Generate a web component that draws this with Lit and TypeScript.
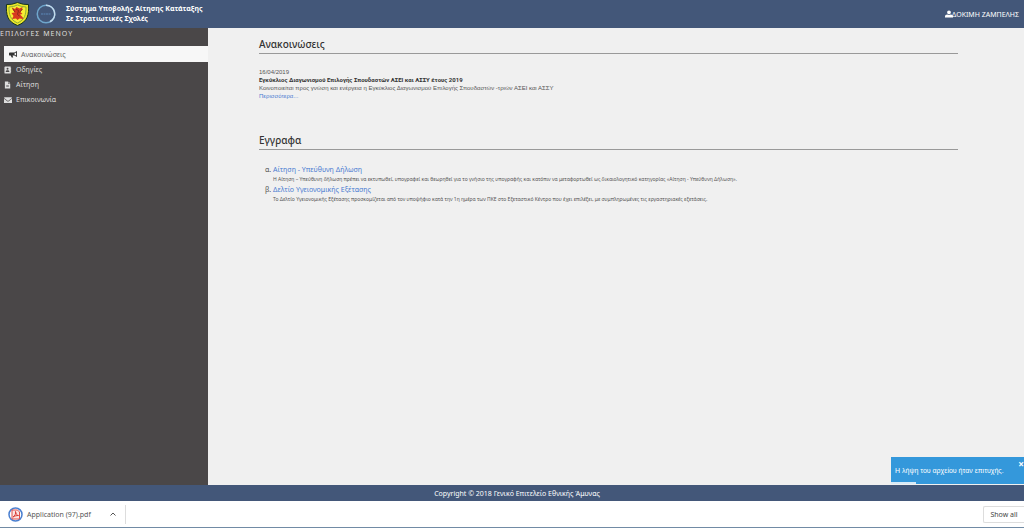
import { LitElement, html, css, svg } from "lit";
import { customElement, property } from "lit/decorators.js";

const ICONS: Record<string, unknown> = {
  horn: svg`<path fill-rule="evenodd" d="M18 1v14l-6-3.500H8l1.500 4.500H6l-2-4.500H2a2 2 0 0 1-2-2V6.500a2 2 0 0 1 2-2h10zM16 4.500L12.500 6.200v3.600L16 11.500z"/>`,
  book: svg`<path fill-rule="evenodd" d="M3 0h12v3h1v2h-1v2h1v2h-1v2h1v2h-1v3H3a2 2 0 0 1-2-2V2a2 2 0 0 1 2-2zM8 3a2.200 2.200 0 1 0 0 4.400A2.200 2.200 0 0 0 8 3zM4 12.500h8v-1c0-4-8-4-8 0z"/>`,
  file: svg`<path fill-rule="evenodd" d="M2 0h7v5h5v11H2zM10 0l4 4h-4zM5 8v1.200h6V8zM5 11v1.200h6V11z"/>`,
  mail: svg`<path d="M0 3.500C0 2.500.7 2 1.500 2h15c.8 0 1.500.5 1.500 1.500L9 10zM0 5.300L9 11.700l9-6.400V15H0z"/>`,
  user: svg`<path d="M9 0a4.300 4.300 0 1 1 0 8.600A4.300 4.300 0 0 1 9 0zM5 9c2.500 1.300 5.500 1.300 8 0 3 .2 5 2 5 4.500V16H0v-2.500C0 11 2 9.200 5 9z"/>`,
};

const icon = (name: string) =>
  html`<svg class="icon" viewBox="0 0 18 16" aria-hidden="true">${ICONS[name]}</svg>`;

@customElement("app-header")
class AppHeader extends LitElement {
  static styles = css`
    :host {
      display: flex;
      align-items: center;
      height: 28px;
      padding: 0 5px;
      box-sizing: border-box;
      background: #435779;
      color: #fff;
    }
    .crest { width: 25px; height: 24px; }
    .ring { width: 20px; height: 20px; margin-left: 6px; }
    .title {
      margin: 0 auto 0 10px;
      font-size: 7px;
      line-height: 10px;
      font-weight: 700;
    }
    .user {
      display: flex;
      align-items: center;
      color: inherit;
      text-decoration: none;
      font-size: 7px;
    }
    .icon { width: 8px; height: 8px; margin-right: -1px; fill: #fff; }
  `;
  render() {
    return html`
      <svg class="crest" viewBox="0 0 50 48" aria-hidden="true">
        <path d="M3 5Q13 6 25 1q12 5 22 4c1 20-1 34-22 42C4 39 2 25 3 5z" fill="#e9e52a" stroke="#16331f" stroke-width="2"/>
        <path d="M8 10q9 0 17-4 8 4 17 4c0 15-2 25-17 32C10 35 8 25 8 10z" fill="#f7ee32" stroke="#8fae36" stroke-width="2"/>
        <path d="M14 11l6 3 3-4 6 3 6-3-1 6-4 3 5 5-5 1 5 5 2 4-8-1-4 3-3-3-8 1 3-6-4-6 6-1-2-4z" fill="#d63a20"/>
        <path d="M22 14l5 3-2 8 4 3M15 13l5 7M35 14l-6 7" fill="none" stroke="#8a2a18" stroke-width="2"/>
      </svg>
      <svg class="ring" viewBox="0 0 40 40" aria-hidden="true">
        <circle cx="20" cy="20" r="17.500" fill="none" stroke="#6fa6cc" stroke-width="3"/>
        <path d="M20 2.500A17.500 17.500 0 0 1 28 35.500" fill="none" stroke="#c3d9ea" stroke-width="3"/>
        <path d="M10 20h20" stroke="#4f6f98" stroke-width="4" stroke-dasharray="4 1"/>
      </svg>
      <h1 class="title">Σύστημα Υποβολής Αίτησης Κατάταξης<br />Σε Στρατιωτικές Σχολές</h1>
      <a class="user" href="#user">${icon("user")}ΔΟΚΙΜΗ ΖΑΜΠΕΛΗΣ</a>
    `;
  }
}

@customElement("app-menu")
class AppMenu extends LitElement {
  @property() current = "news";
  static styles = css`
    :host { display: block; background: #4a4748; color: #dedede; }
    .heading {
      margin: 0 0 7px;
      padding-top: 1px;
      font-size: 7px;
      line-height: 10px;
      font-weight: 400;
      letter-spacing: 1px;
    }
    .item {
      display: flex;
      align-items: center;
      gap: 4px;
      margin-left: 4px;
      height: 15px;
      font-size: 7px;
      color: inherit;
      text-decoration: none;
    }
    .item.active { height: 16px; padding-left: 5px; background: #f7f7f7; color: #666; }
    .icon { width: 8px; height: 8px; fill: currentColor; }
    .active .icon { fill: #333; }
  `;
  items = [
    ["news", "horn", "Ανακοινώσεις"],
    ["help", "book", "Οδηγίες"],
    ["form", "file", "Αίτηση"],
    ["contact", "mail", "Επικοινωνία"],
  ];
  render() {
    return html`
      <h2 class="heading">ΕΠΙΛΟΓΕΣ ΜΕΝΟΥ</h2>
      <nav>
        ${this.items.map(
          ([id, glyph, label]) =>
            html`<a class="item ${id === this.current ? "active" : ""}" href="#${id}">${icon(glyph)}${label}</a>`
        )}
      </nav>
    `;
  }
}

@customElement("app-root")
class AppRoot extends LitElement {
  static styles = css`
    :host {
      display: flex;
      flex-direction: column;
      min-height: 100vh;
      font-family: "Noto Sans", "Open Sans", sans-serif;
      background: #f0f0f0;
      color: #555;
    }
    .body { flex: 1; display: grid; grid-template-columns: 208px 1fr; position: relative; }
    .content { padding: 8px 66px 0 51px; }
    .section { margin-bottom: 32px; }
    .section-title {
      margin: 0 0 14px;
      padding-bottom: 1px;
      border-bottom: 1px solid #999;
      font-size: 10px;
      line-height: 16px;
      font-weight: 500;
      color: #333;
    }
    .news { margin: 0; font-family: "Liberation Sans", sans-serif; font-size: 6px; line-height: 8px; }
    .news b { font-family: Roboto, "Noto Sans", sans-serif; color: #333; }
    .link { color: #4a7bd0; text-decoration: none; }
    .docs { margin: 0; padding-left: 14px; list-style: lower-greek; font-size: 7px; line-height: 11px; }
    .note { margin: 0; font-size: 5px; line-height: 9px; }
    .toast {
      position: absolute;
      right: 0;
      bottom: 1px;
      width: 133px;
      height: 27px;
      box-sizing: border-box;
      padding-left: 4px;
      display: flex;
      align-items: center;
      background: #3498db;
      color: #fff;
      font-family: "Liberation Sans", sans-serif;
      font-size: 7px;
    }
    .close {
      position: absolute;
      top: 3px;
      right: 0;
      padding: 0;
      border: 0;
      background: none;
      color: #fff;
      font: 700 10px/8px "Noto Sans", sans-serif;
    }
    .progress { position: absolute; left: 0; bottom: 0; width: 19%; height: 2px; background: #d6eaf8; }
    .footer {
      height: 16px;
      display: flex;
      align-items: center;
      justify-content: center;
      padding-left: 10px;
      background: #435779;
      color: #fff;
      font-size: 7px;
    }
    .downloads {
      display: flex;
      align-items: center;
      height: 27px;
      box-sizing: border-box;
      border-bottom: 1px solid #718ba5;
      background: #fff;
      color: #555;
      font-size: 7px;
    }
    .download {
      display: flex;
      align-items: center;
      height: 19px;
      width: 126px;
      box-sizing: border-box;
      padding: 0 9px 0 8px;
      gap: 4px;
      border: 0;
      border-right: 1px solid #ddd;
      background: none;
      color: inherit;
      font: inherit;
    }
    .pdf { width: 15px; height: 15px; }
    .chevron { width: 6px; height: 4px; margin-left: auto; }
    .all {
      margin-left: auto;
      height: 17px;
      width: 41px;
      padding: 0;
      border: 1px solid #ddd;
      border-right: 0;
      border-radius: 2px 0 0 2px;
      background: #fff;
      color: #444;
      font: inherit;
    }
  `;
  render() {
    return html`
      <app-header></app-header>
      <div class="body">
        <app-menu></app-menu>
        <main class="content">
          <section class="section">
            <h2 class="section-title">Ανακοινώσεις</h2>
            <p class="news">
              16/04/2019<br />
              <b>Εγκύκλιος Διαγωνισμού Επιλογής Σπουδαστών ΑΣΕΙ και ΑΣΣΥ έτους 2019</b><br />
              Κοινοποιείται προς γνώση και ενέργεια η Εγκύκλιος Διαγωνισμού Επιλογής Σπουδαστών -τριών ΑΣΕΙ και ΑΣΣΥ<br />
              <a class="link" href="#more">Περισσότερα...</a>
            </p>
          </section>
          <section class="section">
            <h2 class="section-title">Εγγραφα</h2>
            <ol class="docs">
              <li>
                <a class="link" href="#application">Αίτηση - Υπεύθυνη Δήλωση</a>
                <p class="note">Η Αίτηση – Υπεύθυνη δήλωση πρέπει να εκτυπωθεί, υπογραφεί και θεωρηθεί για το γνήσιο της υπογραφής και κατόπιν να μεταφορτωθεί ως δικαιολογητικό κατηγορίας «Αίτηση - Υπεύθυνη Δήλωση».</p>
              </li>
              <li>
                <a class="link" href="#health">Δελτίο Υγειονομικής Εξέτασης</a>
                <p class="note">Το Δελτίο Υγειονομικής Εξέτασης προσκομίζεται από τον υποψήφιο κατά την 1η ημέρα των ΠΚΕ στο Εξεταστικό Κέντρο που έχει επιλέξει, με συμπληρωμένες τις εργαστηριακές εξετάσεις.</p>
              </li>
            </ol>
          </section>
        </main>
        <div class="toast" role="status">
          Η λήψη του αρχείου ήταν επιτυχής.
          <button class="close" aria-label="Κλείσιμο">×</button>
          <span class="progress"></span>
        </div>
      </div>
      <footer class="footer">Copyright © 2018 Γενικό Επιτελείο Εθνικής Άμυνας</footer>
      <div class="downloads">
        <button class="download">
          <svg class="pdf" viewBox="0 0 30 30" aria-hidden="true">
            <circle cx="15" cy="15" r="13" fill="#fff" stroke="#4a7fd0" stroke-width="3"/>
            <path d="M8 6h11l4 4v14H8z" fill="#fbe3e1" stroke="#e0504a" stroke-width="2"/>
            <path d="M10 20c4-2 6-7 5-11 1 5 3 8 6 8-4 0-8 1-11 3z" fill="none" stroke="#d93a34" stroke-width="2"/>
          </svg>
          Application (97).pdf
          <svg class="chevron" viewBox="0 0 12 8" aria-hidden="true"><path d="M1 7l5-5 5 5" fill="none" stroke="#555" stroke-width="2"/></svg>
        </button>
        <button class="all">Show all</button>
      </div>
    `;
  }
}
